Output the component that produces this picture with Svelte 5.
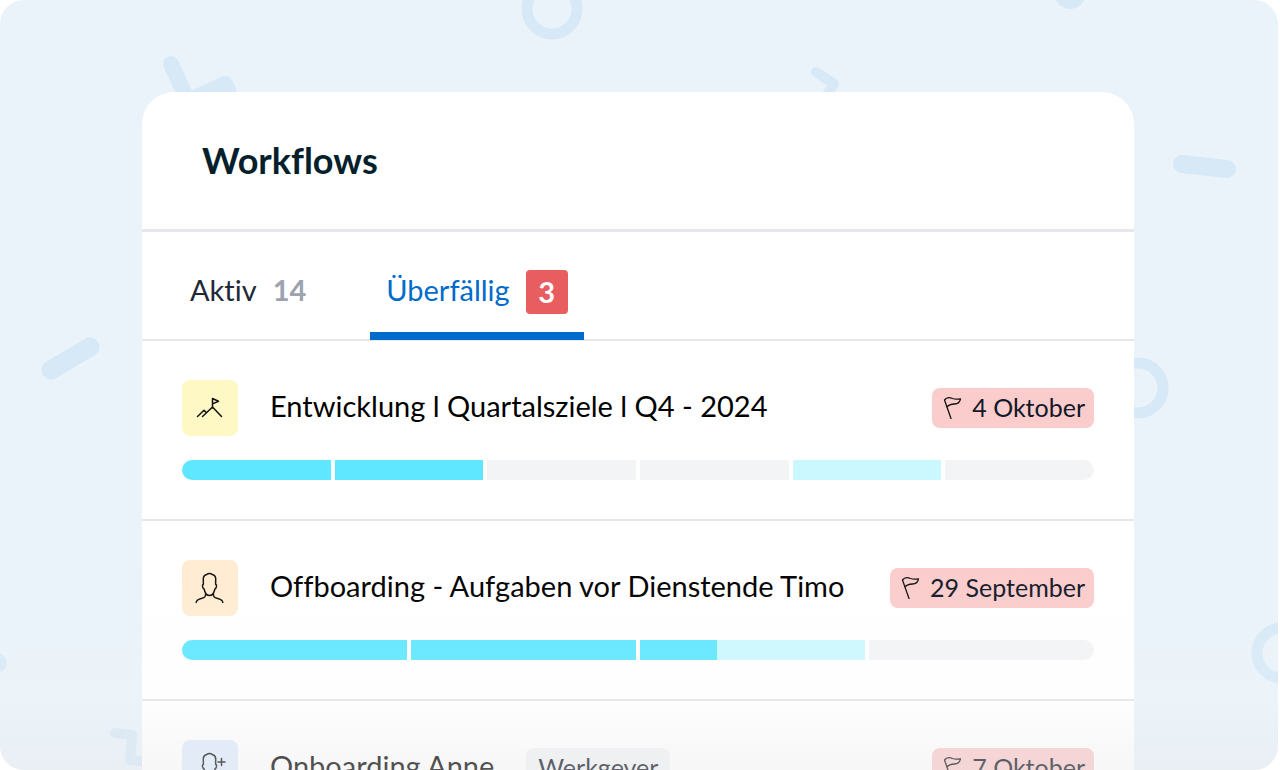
<script>
  let current = $state('overdue');

  const tabs = [
    { id: 'active', label: 'Aktiv', count: 14 },
    { id: 'overdue', label: 'Überfällig', count: 3 },
  ];

  const rows = [
    {
      title: 'Entwicklung l Quartalsziele l Q4 - 2024',
      icon: 'goal',
      due: '4 Oktober',
      steps: [['done', 100], ['done', 100], ['open', 100], ['open', 100], ['active', 100], ['open', 100]],
    },
    {
      title: 'Offboarding - Aufgaben vor Dienstende Timo',
      icon: 'person',
      due: '29 September',
      steps: [['done', 100], ['done', 100], ['active', 34], ['open', 100]],
    },
    {
      title: 'Onboarding Anne',
      tag: 'Werkgever',
      icon: 'add',
      due: '7 Oktober',
      steps: [['done', 100], ['active', 50], ['open', 100], ['open', 100]],
    },
  ];
</script>

<main class="stage">
  <svg class="confetti" viewBox="0 0 1280 770" width="1280" height="770" fill="none" stroke="#d7e9f7" stroke-linecap="round" stroke-linejoin="round" aria-hidden="true">
    <circle cx="552" cy="9" r="25" stroke-width="11" />
    <circle cx="1070" cy="-7" r="16" fill="#d7e9f7" stroke="none" />
    <path d="M171 64l17 37 37-17 14 30" stroke-width="16" />
    <path d="M816 72l18 12-12 18" stroke-width="10" />
    <path d="M1182 164l45 5" stroke-width="18" />
    <path d="M51 370l39-23" stroke-width="19" />
    <circle cx="1138" cy="388" r="25" stroke-width="11" />
    <circle cx="1282" cy="653" r="25" stroke-width="11" />
    <path d="M-16 652l14 11" stroke-width="18" />
    <path d="M115 733l17 2-2 25 20 2" stroke-width="10" />
  </svg>

  <section class="card">
    <header class="head"><h1>Workflows</h1></header>

    <nav class="tabs">
      {#each tabs as tab}
        <button class="tab" class:selected={current === tab.id} onclick={() => (current = tab.id)}>
          {tab.label}
          <span class="count">{tab.count}</span>
        </button>
      {/each}
    </nav>

    {#each rows as row}
      <article class="row">
        <div class="line">
          <span class="icon {row.icon}">
            <svg viewBox="0 0 56 56" width="56" height="56" fill="none" stroke="#111" stroke-width="1.5" stroke-linecap="round" stroke-linejoin="round" aria-hidden="true">
              {#if row.icon === 'goal'}
                <path d="M30.500 28V18.500l6 2.700-6 2.700M15.500 36.500l6.500-6.200 2 2M20.500 36.500l10-9.500 9 9.500" />
              {:else if row.icon === 'person'}
                <path d="M27.500 13.500c-1.800 0-2.500.7-3.400 1.300-2 .6-3 2.500-2.800 5.200l.1 4.200c-1.700.4-.8 4.300.7 4.800.7 3.600 2.700 6.500 5.400 6.500s4.700-2.900 5.400-6.500c1.500-.5 2.400-4.400.7-4.800l.1-4.200c.2-2.700-.8-4.600-2.800-5.200-.9-.6-1.600-1.300-3.400-1.300z" />
                <path d="M23.500 34c.3 3-1 3.600-3.500 4.200-4 1-5.800 1.800-5.800 4.300M31.500 34c-.3 3 1 3.600 3.500 4.200 4 1 5.800 1.800 5.800 4.300" />
              {:else}
                <path d="M27.500 13.500c-1.800 0-2.500.7-3.400 1.300-2 .6-3 2.500-2.800 5.200l.1 4.200c-1.700.4-.8 4.300.7 4.800.7 3.600 2.700 6.500 5.400 6.500s4.700-2.900 5.400-6.500c1.500-.5 2.400-4.400.7-4.800l.1-4.200c.2-2.700-.8-4.600-2.800-5.200-.9-.6-1.600-1.300-3.400-1.300zM36 22h7M39.500 18.500v7" />
              {/if}
            </svg>
          </span>
          <h2>{row.title}</h2>
          {#if row.tag}<span class="tag">{row.tag}</span>{/if}
          <span class="due">
            <svg viewBox="0 0 20 24" width="20" height="24" fill="none" stroke="#111" stroke-width="1.300" stroke-linecap="round" stroke-linejoin="round" aria-hidden="true">
              <path d="M9 23.500L2.500 5c2-2.700 5-2.800 8-1.500 2.700 1 5 .8 8 .3-.5 3-2.500 5-6 5.200-3.300.2-5.800.8-7.700 3" />
            </svg>
            {row.due}
          </span>
        </div>
        <div class="steps">
          {#each row.steps as [state, share]}
            <span class="step {state}">
              {#if share < 100}<span class="part" style="width: {share}%"></span>{/if}
            </span>
          {/each}
        </div>
      </article>
    {/each}
  </section>
  <div class="fade"></div>
</main>

<style>
  :global(body) { margin: 0; background: #fff; }
  .stage {
    position: relative;
    box-sizing: border-box;
    height: 100vh;
    margin-right: 2px;
    padding: 92px 144px 0 142px;
    overflow: hidden;
    border-radius: 24px;
    background: #eaf3fa;
    font-family: Lato, "Liberation Sans", sans-serif;
    font-variant-ligatures: none;
    color: #000;
  }
  .confetti { position: absolute; top: 0; left: 0; }
  .card { position: relative; background: #fff; border-radius: 32px 32px 0 0; }
  .head { padding: 44px 60px; border-bottom: 3px solid #e5e7eb; }
  h1 { margin: 0; font-size: 36px; line-height: 49px; font-weight: 700; color: #061f2d; }
  .tabs { display: flex; gap: 48px; height: 107px; padding: 0 32px; border-bottom: 2px solid #e5e7eb; }
  .tab {
    display: flex;
    align-items: center;
    gap: 16px;
    box-sizing: border-box;
    height: 108px;
    padding: 16px 16px 0;
    border: 0;
    border-bottom: 8px solid transparent;
    background: none;
    font-family: inherit;
    font-size: 29px;
    line-height: 36px;
    font-variant-ligatures: none;
    color: #1f2937;
    cursor: pointer;
  }
  .count { font-weight: 700; color: #9ca3af; }
  .selected { color: #006bcb; border-color: #006bcb; }
  .selected .count {
    box-sizing: border-box;
    min-width: 42px;
    margin-top: 4px;
    padding: 4px 8px;
    border-radius: 4px;
    background: #e85e60;
    color: #fff;
    text-align: center;
  }
  .row { padding: 39px 40px; border-bottom: 2px solid #e5e7eb; }
  .line { display: flex; align-items: center; }
  .icon { height: 56px; margin-right: 32px; border-radius: 8px; }
  .goal { background: #fdf8c4; }
  .person { background: #ffecd2; }
  .add { background: #dfecfd; }
  h2 { margin: 0; padding-bottom: 4px; font-size: 29px; line-height: 36px; font-weight: 400; }
  .tag, .due {
    display: flex;
    align-items: center;
    height: 40px;
    box-sizing: border-box;
    border-radius: 8px;
    font-size: 25px;
    line-height: 32px;
    color: #111827;
  }
  .tag { margin-left: 32px; padding: 0 12px 2px; background: #f3f4f6; }
  .due { gap: 10px; margin-left: auto; padding: 0 9px 2px 10px; background: #fbcccc; }
  .steps { display: flex; gap: 4px; height: 20px; margin-top: 24px; overflow: hidden; border-radius: 10px; }
  .step { flex: 1; background: #f3f4f6; }
  .done { background: #5ee7ff; }
  .active { background: #cbf8ff; }
  .part { display: block; height: 100%; background: #5ee7ff; }
  .fade {
    position: absolute;
    right: 0;
    bottom: 0;
    left: 0;
    height: 210px;
    pointer-events: none;
    background: linear-gradient(rgba(255, 255, 255, 0), rgba(246, 246, 246, 0.14) 65%, rgba(232, 232, 232, 0.36));
  }
</style>
